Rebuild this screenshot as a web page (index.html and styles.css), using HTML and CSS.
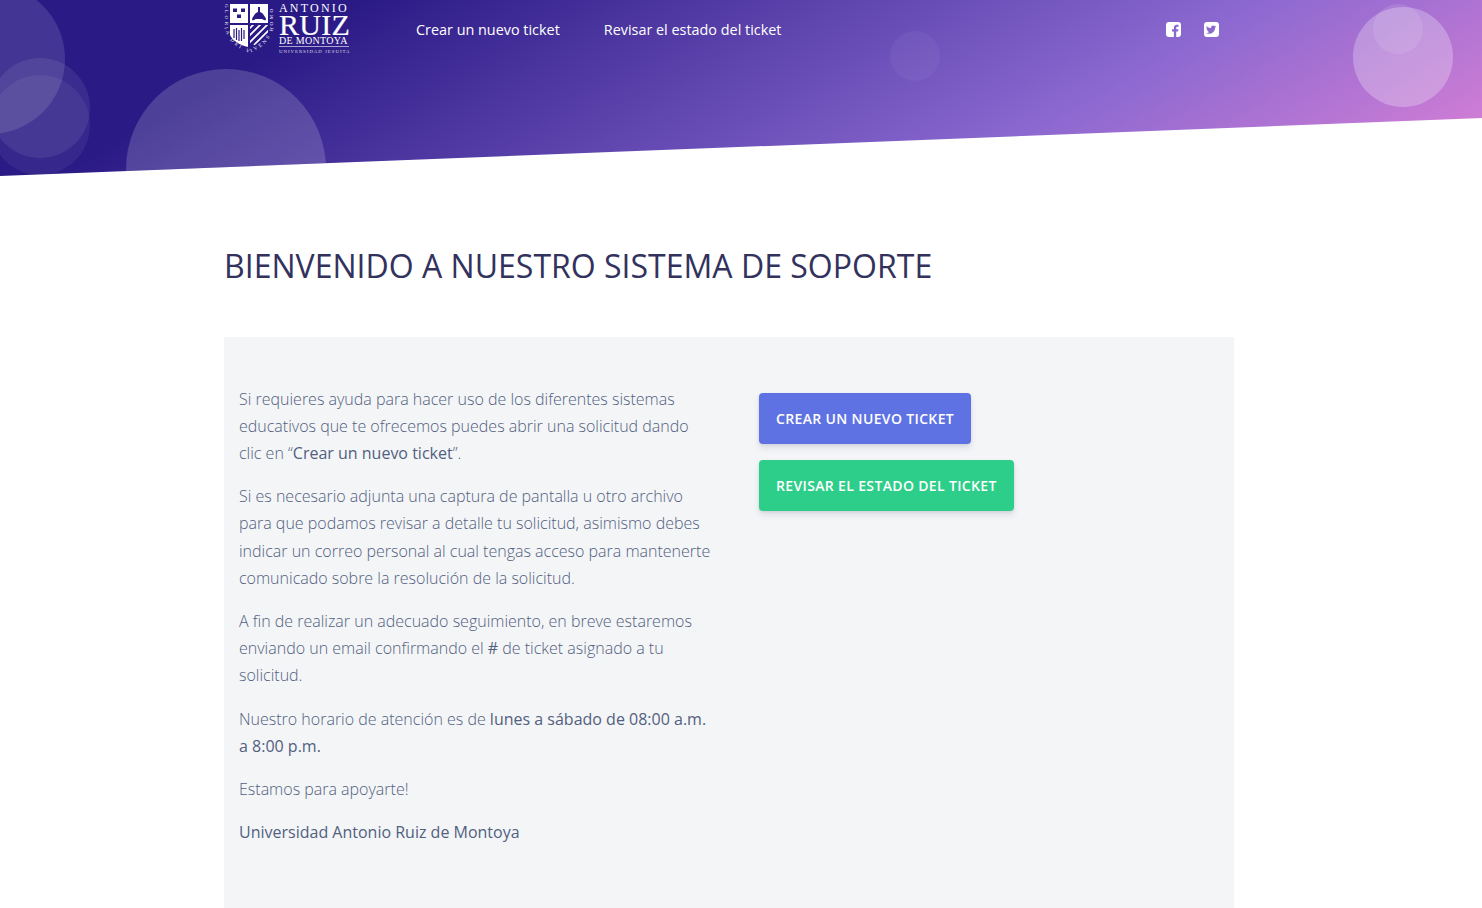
FILE: index.html
```html
<!DOCTYPE html>
<html lang="es">
<head>
    <meta charset="UTF-8">
    <meta name="viewport" content="width=device-width, initial-scale=1.0">
    <title>Sistema de soporte</title>
    <link rel="stylesheet" href="styles.css">
</head>
<body>

<header class="hero">
    <span class="bubble bubble-1"></span>
    <span class="bubble bubble-2"></span>
    <span class="bubble bubble-3"></span>
    <span class="bubble bubble-4"></span>
    <span class="bubble bubble-5"></span>
    <span class="bubble bubble-6"></span>
    <span class="bubble bubble-7"></span>

    <nav class="navbar">
        <a class="brand" href="#">
            <svg class="crest" width="50" height="54" viewBox="0 0 50 54">
                <defs>
                    <clipPath id="lower-right"><path d="M26 25h18v9c-3 6-10 10-18 13z"/></clipPath>
                    <path id="crest-edge" d="M.5 4V27C3 41 14 49 25 53 36 49 47 41 49.500 27V4"/>
                </defs>
                <rect x="6" y="4" width="18" height="19" fill="#fff"/>
                <rect x="26" y="4" width="18" height="19" fill="#fff"/>
                <path d="M6 25h18v22c-8-2-15-6-18-12z" fill="#fff"/>
                <path d="M9 8l1 1 1-1 1 1 1-1v4H9zM17 8l1 1 1-1 1 1 1-1v4h-4zM13 14l1 1 1-1 1 1 1-1v4h-4z" fill="#2c1a84"/>
                <path d="M28 20c0-3 2-4 3-6 1-1 2-2 3-2V7h2v5c1 0 2 1 3 2 1 2 3 3 3 6-2 1-3-1-4-1h-6c-1 0-2 2-4 1z" fill="#2c1a84"/>
                <path d="M10 29v9M12.500 28v12M15 30v11M17.500 28v13M20 30v9" stroke="#2c1a84" stroke-width="1.200"/>
                <g clip-path="url(#lower-right)" stroke="#fff" stroke-width="1.700">
                    <path d="M22 32l9-9M22 39l17-17M24 44l22-22M30 45l18-18M36 45l14-14"/>
                </g>
                <text class="crest-text"><textPath href="#crest-edge" textLength="116">GLORIA DEI VIVENS HOMO</textPath></text>
            </svg>
            <span class="wordmark">
                <span class="wm-top">ANTONIO</span>
                <span class="wm-main">RUIZ</span>
                <span class="wm-sub">DE MONTOYA</span>
                <span class="wm-foot">UNIVERSIDAD JESUITA</span>
            </span>
        </a>
        <a class="nav-link" href="#">Crear un nuevo ticket</a>
        <a class="nav-link" href="#">Revisar el estado del ticket</a>
        <div class="social">
            <a href="#" aria-label="Facebook">
                <svg width="15" height="15" viewBox="0 0 15 15"><path fill="#fff" fill-rule="evenodd" d="M3 0h9a3 3 0 0 1 3 3v9a3 3 0 0 1-3 3h-1.800V9.400h1.900l.3-2.200h-2.200V5.900c0-.7.200-1.100 1.100-1.100h1.200v-2c-.3 0-.9-.1-1.700-.1-1.700 0-2.800 1-2.800 2.900v1.600H6v2.200h1.900V15H3a3 3 0 0 1-3-3V3a3 3 0 0 1 3-3z"/></svg>
            </a>
            <a href="#" aria-label="Twitter">
                <svg width="15" height="15" viewBox="0 0 15 15"><path fill="#fff" fill-rule="evenodd" d="M3 0h9a3 3 0 0 1 3 3v9a3 3 0 0 1-3 3H3a3 3 0 0 1-3-3V3a3 3 0 0 1 3-3zm9.300 4.600c-.4.200-.8.300-1.200.3.400-.3.800-.7.900-1.200-.4.200-.9.400-1.300.5a2.100 2.100 0 0 0-3.600 1.900C5.300 6 3.800 5.200 2.800 3.900c-.6 1-.3 2.200.6 2.800-.3 0-.6-.1-.9-.3 0 1 .7 1.900 1.700 2.100-.3.100-.6.100-.9 0 .3.900 1.100 1.400 2 1.500-.9.700-2 1-3.100.9 2.900 1.800 7.900.9 8.800-4.100.1-.4.100-.8.100-1.100.5-.3.800-.7 1.200-1.100z"/></svg>
            </a>
        </div>
    </nav>
</header>

<main class="container">
    <h1 class="page-title">BIENVENIDO A NUESTRO SISTEMA DE SOPORTE</h1>

    <section class="panel">
        <div class="panel-text">
            <p>Si requieres ayuda para hacer uso de los diferentes sistemas educativos que te ofrecemos puedes abrir una solicitud dando clic en “<strong>Crear un nuevo ticket</strong>”.</p>
            <p>Si es necesario adjunta una captura de pantalla u otro archivo para que podamos revisar a detalle tu solicitud, asimismo debes indicar un correo personal al cual tengas acceso para mantenerte comunicado sobre la resolución de la solicitud.</p>
            <p>A fin de realizar un adecuado seguimiento, en breve estaremos enviando un email confirmando el <strong>#</strong> de ticket asignado a tu solicitud.</p>
            <p>Nuestro horario de atención es de <strong>lunes a sábado de 08:00 a.m. a 8:00 p.m.</strong></p>
            <p>Estamos para apoyarte!</p>
            <p><strong>Universidad Antonio Ruiz de Montoya</strong></p>
        </div>
        <div class="panel-actions">
            <a class="btn btn-blue" href="#">Crear un nuevo ticket</a>
            <a class="btn btn-green" href="#">Revisar el estado del ticket</a>
        </div>
    </section>
</main>

</body>
</html>
```

FILE: styles.css
```css
html, body {
    margin: 0;
    padding: 0;
}
body {
    font-family: "Open Sans", sans-serif;
    background-color: #fff;
    color: #525f7f;
    height: 908px;
    overflow: hidden;
}
a {
    text-decoration: none;
}

/* cabecera */
.hero {
    position: relative;
    height: 176px;
    overflow: hidden;
    background: linear-gradient(150deg, #2a1a85 0%, #2a1a85 20%, #8a68d0 70%, #d57fd6 97%);
    clip-path: polygon(0 0, 100% 0, 100% 118px, 0 176px);
}
.bubble {
    position: absolute;
    border-radius: 50%;
    background: rgba(255, 255, 255, 0.12);
}
.bubble-1 { left: -85px; top: -16px; width: 150px; height: 150px; }
.bubble-2 { left: -10px; top: 58px; width: 100px; height: 100px; background: rgba(255, 255, 255, 0.08); }
.bubble-3 { left: -10px; top: 75px; width: 100px; height: 100px; background: rgba(255, 255, 255, 0.06); }
.bubble-4 { left: 126px; top: 69px; width: 200px; height: 200px; background: rgba(255, 255, 255, 0.17); }
.bubble-5 { left: 890px; top: 31px; width: 50px; height: 50px; background: rgba(255, 255, 255, 0.045); }
.bubble-6 { left: 1353px; top: 7px; width: 100px; height: 100px; background: rgba(255, 255, 255, 0.26); }
.bubble-7 { left: 1373px; top: 4px; width: 50px; height: 50px; background: rgba(255, 255, 255, 0.1); }

.navbar {
    position: relative;
    width: 1010px;
    margin-left: 224px;
    display: flex;
    align-items: flex-start;
}
.brand {
    display: flex;
    color: #fff;
    width: 192px;
    height: 54px;
}
.crest {
    flex: none;
}
.crest-text {
    font-family: "Liberation Serif", serif;
    font-size: 5px;
    fill: #fff;
}
.wordmark {
    display: flex;
    flex-direction: column;
    margin-left: 5px;
    font-family: "Liberation Serif", serif;
    color: #fff;
    width: 72px;
}
.wm-top {
    font-size: 12px;
    line-height: 11px;
    letter-spacing: 2.200px;
    margin-top: 3px;
    white-space: nowrap;
}
.wm-main {
    font-size: 30px;
    line-height: 22px;
    letter-spacing: 0.300px;
    -webkit-text-stroke: 0.2px #fff;
}
.wm-sub {
    font-size: 10px;
    line-height: 9px;
    letter-spacing: 0.300px;
    padding-bottom: 1px;
    width: 70px;
    white-space: nowrap;
    border-bottom: 1px solid rgba(255, 255, 255, 0.6);
}
.wm-foot {
    font-size: 4.800px;
    line-height: 8px;
    letter-spacing: 1px;
    margin-top: 1px;
    white-space: nowrap;
    opacity: 0.8;
}
.nav-link {
    color: #fff;
    font-size: 14.400px;
    line-height: 20px;
    margin-top: 20px;
    margin-right: 44px;
    white-space: nowrap;
}
.social {
    display: flex;
    gap: 23px;
    margin-left: auto;
    margin-right: 15px;
    margin-top: 20px;
}
.social a {
    display: block;
    height: 15px;
}

/* contenido */
.container {
    width: 1010px;
    margin-left: 224px;
}
.page-title {
    margin: 66px 0 47px;
    font-size: 32.040px;
    line-height: 48px;
    font-weight: 400;
    color: #32325d;
    white-space: nowrap;
}
.panel {
    display: flex;
    background-color: #f4f5f7;
    padding: 48.600px 15px 0;
    height: 571px;
    box-sizing: border-box;
}
.panel-text {
    width: 473px;
    flex: none;
    margin-right: 47px;
}
.panel-text p {
    margin: 0 0 16px;
    font-size: 16px;
    line-height: 27.200px;
    font-weight: 300;
}
.panel-text strong {
    font-weight: 400;
}
.panel-actions {
    display: flex;
    flex-direction: column;
    align-items: flex-start;
    gap: 16px;
    padding-top: 7.400px;
}
.btn {
    display: block;
    color: #fff;
    font-size: 14px;
    line-height: 21px;
    font-weight: 600;
    letter-spacing: 0.350px;
    text-transform: uppercase;
    padding: 15px 17px;
    border-radius: 4px;
    box-shadow: 0 4px 6px rgba(50, 50, 93, 0.11), 0 1px 3px rgba(0, 0, 0, 0.08);
    white-space: nowrap;
}
.btn-blue { background-color: #5e72e4; }
.btn-green { background-color: #2dce89; }
```
